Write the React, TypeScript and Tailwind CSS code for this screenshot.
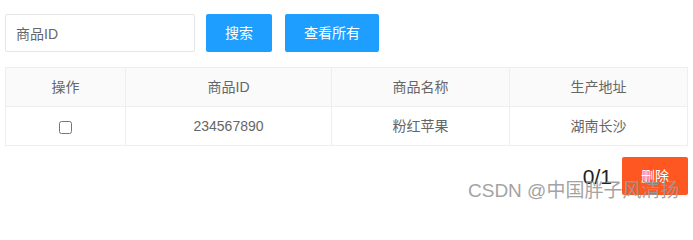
import React from 'react';

const columns = [
  { title: '操作', width: 'w-[120px]' },
  { title: '商品ID', width: 'w-[206px]' },
  { title: '商品名称', width: 'w-[178px]' },
  { title: '生产地址', width: 'w-[178px]' },
];

const rows = [{ id: '234567890', name: '粉红苹果', address: '湖南长沙' }];

export default function App() {
  return (
    <div className="relative h-[211px] w-[693px] overflow-hidden bg-white px-[5px] pt-[14px] font-['Liberation_Sans','Noto_Sans_CJK_SC',sans-serif] text-[14px] text-[#666]">
      {/* Search bar */}
      <div className="flex items-center">
        <input
          type="text"
          defaultValue="商品ID"
          className="h-[38px] w-[190px] rounded-[2px] border border-[#e6e6e6] px-[10px] text-[14px] text-[#666] outline-none"
        />
        <button className="ml-[11px] h-[38px] w-[66px] rounded-[2px] bg-[#1E9FFF] text-[14px] text-white">
          搜索
        </button>
        <button className="ml-[13px] h-[38px] w-[94px] rounded-[2px] bg-[#1E9FFF] text-[14px] text-white">
          查看所有
        </button>
      </div>

      {/* Table */}
      <table className="mt-[15px] w-[683px] table-fixed border-collapse">
        <thead>
          <tr className="bg-[#fafafa]">
            {columns.map((col) => (
              <th
                key={col.title}
                className={`${col.width} h-[39px] border border-[#eee] px-[15px] text-center text-[14px] font-normal leading-[20px] text-[#666]`}
              >
                {col.title}
              </th>
            ))}
          </tr>
        </thead>
        <tbody>
          {rows.map((row) => (
            <tr key={row.id}>
              <td className="h-[39px] border border-[#eee] px-[15px] text-center leading-[20px]">
                <input type="checkbox" className="m-0 h-[13px] w-[13px] align-middle" />
              </td>
              <td className="h-[39px] border border-[#eee] px-[15px] text-center leading-[20px]">{row.id}</td>
              <td className="h-[39px] border border-[#eee] px-[15px] text-center leading-[20px]">{row.name}</td>
              <td className="h-[39px] border border-[#eee] px-[15px] text-center leading-[20px]">{row.address}</td>
            </tr>
          ))}
        </tbody>
      </table>

      {/* Footer */}
      <div className="mt-[11px] flex items-center justify-end">
        <span className="mr-[10px] text-[21px] leading-none text-[#222]">0/1</span>
        <button className="h-[38px] w-[66px] rounded-[2px] bg-[#FF5722] text-[14px] text-white">
          删除
        </button>
      </div>

      {/* Watermark */}
      <div className="absolute left-[468px] top-[179px] whitespace-nowrap text-[19px] leading-[24px] text-[#9a9a9a] opacity-90">
        CSDN @中国胖子风清扬
      </div>
    </div>
  );
}
